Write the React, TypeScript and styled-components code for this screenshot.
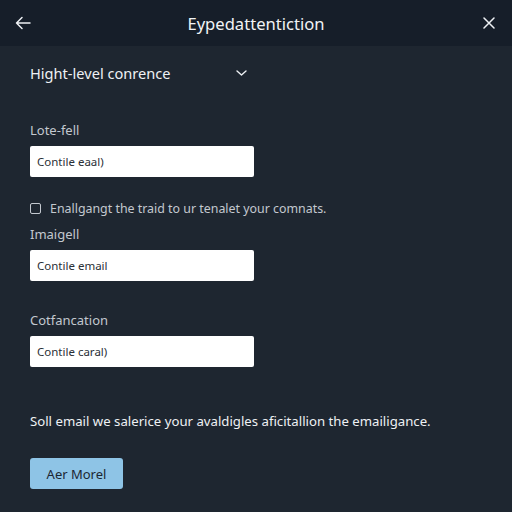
import * as React from 'react';
import styled, { createGlobalStyle } from 'styled-components';

const GlobalStyle = createGlobalStyle`
  html, body {
    margin: 0;
    padding: 0;
    background: #1e2630;
  }
  * {
    box-sizing: border-box;
  }
`;

const Page = styled.div`
  width: 512px;
  height: 512px;
  display: flex;
  flex-direction: column;
  background: #1e2630;
  font-family: 'Noto Sans', 'Open Sans', sans-serif;
  overflow: hidden;
`;

const Header = styled.div`
  height: 46px;
  flex-shrink: 0;
  display: flex;
  align-items: center;
  justify-content: space-between;
  padding: 0 14px 0 14px;
  background: #161e29;
`;

const Title = styled.div`
  font-size: 16.6px;
  color: #f1f3f5;
`;

const IconButton = styled.button`
  width: 18px;
  height: 18px;
  padding: 0;
  border: none;
  background: transparent;
  color: #eef1f4;
  display: flex;
  align-items: center;
  justify-content: center;
`;

const Body = styled.div`
  display: flex;
  flex-direction: column;
  padding: 17px 30px 0 30px;
`;

const Dropdown = styled.div`
  display: flex;
  align-items: center;
  gap: 65px;
  height: 20px;
  font-size: 14.6px;
  color: #eef1f4;
`;

const Field = styled.div<{ top: number }>`
  display: flex;
  flex-direction: column;
  gap: 7px;
  margin-top: ${({ top }) => top}px;
`;

const Label = styled.div`
  font-size: 13px;
  line-height: 18px;
  color: #c3c8cf;
`;

const Input = styled.div`
  width: 224px;
  height: 31px;
  background: #ffffff;
  border-radius: 2px;
  display: flex;
  align-items: center;
  padding-left: 7px;
  font-size: 11.5px;
  color: #2a2f36;
`;

const CheckRow = styled.label`
  display: flex;
  align-items: center;
  gap: 9px;
  margin-top: 22px;
  height: 18px;
  font-size: 12.4px;
  color: #c3c8cf;
`;

const Box = styled.span`
  width: 11px;
  height: 11px;
  border: 1.5px solid #c3c8cf;
  border-radius: 2px;
`;

const Note = styled.p`
  margin: 44px 0 0 0;
  font-size: 13.2px;
  line-height: 20px;
  color: #eef1f4;
`;

const Button = styled.button`
  margin-top: 27px;
  width: 93px;
  height: 31px;
  border: none;
  border-radius: 3px;
  background: #8ec4e6;
  color: #1c2733;
  font-family: inherit;
  font-size: 13px;
  padding: 0;
`;

const fields = [
  { label: 'Imaigell', value: 'Contile email' },
  { label: 'Cotfancation', value: 'Contile caral)' },
];

export default function App() {
  return (
    <>
      <GlobalStyle />
      <Page>
        <Header>
          <IconButton>
            <svg width='16' height='14' viewBox='0 0 16 14' fill='none' stroke='currentColor' strokeWidth='1.5' strokeLinecap='round' strokeLinejoin='round'>
              <path d='M15 7H1.5M7 1.5 1.5 7 7 12.5' />
            </svg>
          </IconButton>
          <Title>Eypedattentiction</Title>
          <IconButton>
            <svg width='12' height='12' viewBox='0 0 12 12' fill='none' stroke='currentColor' strokeWidth='1.5' strokeLinecap='round'>
              <path d='M1 1 11 11M11 1 1 11' />
            </svg>
          </IconButton>
        </Header>
        <Body>
          <Dropdown>
            <span>Hight-level conrence</span>
            <svg width='11' height='6' viewBox='0 0 11 6' fill='none' stroke='currentColor' strokeWidth='1.4' strokeLinecap='round' strokeLinejoin='round'>
              <path d='M1 1 5.5 5 10 1' />
            </svg>
          </Dropdown>
          <Field top={38}>
            <Label>Lote-fell</Label>
            <Input>Contile eaal)</Input>
          </Field>
          <CheckRow>
            <Box />
            Enallgangt the traid to ur tenalet your comnats.
          </CheckRow>
          {fields.map((f, i) => (
            <Field key={f.label} top={i === 0 ? 8 : 30}>
              <Label>{f.label}</Label>
              <Input>{f.value}</Input>
            </Field>
          ))}
          <Note>Soll email we salerice your avaldigles aficitallion the emailigance.</Note>
          <Button>Aer Morel</Button>
        </Body>
      </Page>
    </>
  );
}
